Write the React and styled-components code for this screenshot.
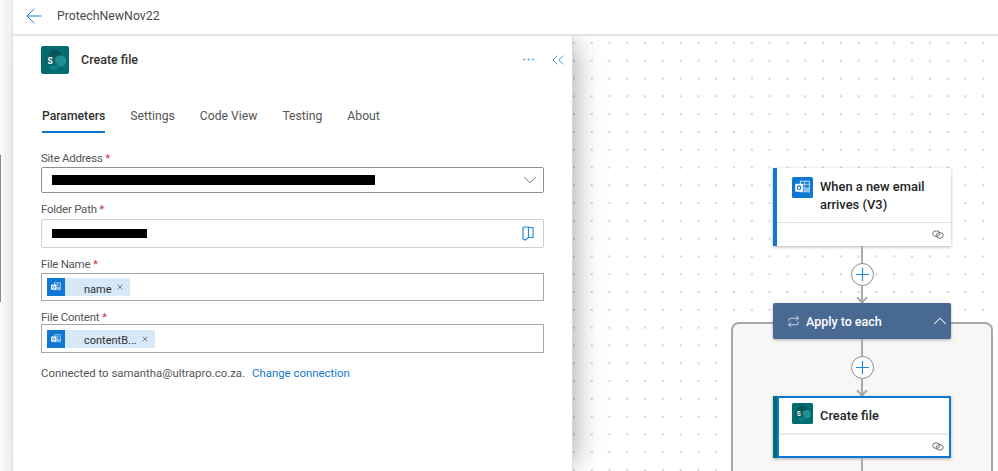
import React from 'react';
import styled, { createGlobalStyle } from 'styled-components';
import { ArrowLeft, ChevronDown, ChevronUp, ChevronsLeft, Ellipsis, Plus, Repeat, X } from 'lucide-react';

const Global = createGlobalStyle`
    html, body {
        margin: 0;
        padding: 0;
        background: #fff;
    }
    body {
        font-family: Roboto, "Open Sans", "Liberation Sans", sans-serif;
        color: #323130;
    }
`;

const SharePointIcon = ({ size }) => (
    <IconSvg width={size} height={size} viewBox="0 0 28 28">
        <rect width="28" height="28" rx="2" fill="#036c70" />
        <circle cx="14" cy="10.5" r="6.8" fill="#0a5357" />
        <circle cx="19.5" cy="15" r="5.8" fill="#1f8f92" />
        <circle cx="13" cy="20" r="4.6" fill="#0c7f83" />
        <rect x="4" y="9.5" width="10" height="10" rx="1" fill="#0a5f63" />
        <text x="9" y="17.5" fontSize="8.5" fontWeight="700" fill="#fff" textAnchor="middle">S</text>
    </IconSvg>
);

const OutlookIcon = ({ size }) => (
    <IconSvg width={size} height={size} viewBox="0 0 20 20">
        <rect width="20" height="20" rx="1.5" fill="#0f78d4" />
        <rect x="8" y="4" width="8.5" height="10" fill="none" stroke="#b9d8f3" strokeWidth="1" />
        <path d="M8 7h8.5M8 10.5h8.5M12 4v10" stroke="#b9d8f3" strokeWidth="0.8" />
        <path d="M9 11l7.5 4v-5z" fill="#8cc0ec" />
        <rect x="3" y="6.5" width="7.5" height="7.5" rx="1" fill="#fff" />
        <circle cx="6.7" cy="10.2" r="1.7" fill="none" stroke="#0f78d4" strokeWidth="1.1" />
    </IconSvg>
);

const LinkIcon = () => (
    <svg width="12" height="9" viewBox="0 0 12 9" fill="none" stroke="#707070" strokeWidth="1">
        <ellipse cx="4.2" cy="3.6" rx="3.5" ry="2.8" />
        <ellipse cx="7.8" cy="5.4" rx="3.5" ry="2.8" />
    </svg>
);

const FolderIcon = () => (
    <svg width="12" height="15" viewBox="0 0 12 15" fill="none" stroke="#2b88d8" strokeWidth="1.2">
        <path d="M1 1h5.5v10.5H11V1.5H6.5M1 1v12l2 1 3.5-2.5" />
    </svg>
);

const Field = ({ label, children }) => (
    <div>
        <FieldLabel>{label}<Star> *</Star></FieldLabel>
        {children}
    </div>
);

const Token = ({ text }) => (
    <TokenPill>
        <TokenIcon><OutlookIcon size={14} /></TokenIcon>
        <TokenText>{text}</TokenText>
        <X size={8} strokeWidth={2} color="#444" />
    </TokenPill>
);

const Connector = () => (
    <Wire $height={57}>
        <PlusButton><Plus size={21} strokeWidth={1.3} color="#1f8ae6" /></PlusButton>
        <ArrowHead />
    </Wire>
);

const tabs = ['Parameters', 'Settings', 'Code View', 'Testing', 'About'];

export default function App() {
    return (
        <Page>
            <Global />
            <LeftRail><RailLine /></LeftRail>
            <Main>
                <TopBar>
                    <ArrowLeft size={24} strokeWidth={1} color="#1a86e8" />
                    <FlowName>ProtechNewNov22</FlowName>
                </TopBar>
                <Body>
                    <Panel>
                        <PanelHeader>
                            <SharePointIcon size={28} />
                            <PanelTitle>Create file</PanelTitle>
                            <Ellipsis size={15} strokeWidth={1.4} color="#4a9be0" />
                            <ChevronsLeft size={20} strokeWidth={1.2} color="#4a9be0" />
                        </PanelHeader>
                        <Tabs>
                            {tabs.map((tab, i) => <Tab key={tab} $active={i === 0}>{tab}</Tab>)}
                        </Tabs>
                        <Form>
                            <Field label="Site Address">
                                <Select>
                                    <Redacted $width={323} $height={10} />
                                    <ChevronDown size={22} strokeWidth={0.9} color="#555" />
                                </Select>
                            </Field>
                            <Field label="Folder Path">
                                <PathInput>
                                    <Redacted $width={95} $height={9} />
                                    <FolderIcon />
                                </PathInput>
                            </Field>
                            <Field label="File Name">
                                <TokenInput $top={1} $height={28}><Token text="name" /></TokenInput>
                            </Field>
                            <Field label="File Content">
                                <TokenInput $top={-1} $height={29}><Token text="contentB..." /></TokenInput>
                            </Field>
                        </Form>
                        <Connection>
                            Connected to samantha@ultrapro.co.za.
                            <ChangeLink>Change connection</ChangeLink>
                        </Connection>
                    </Panel>
                    <Canvas>
                        <Flow>
                            <Card $accent="#0f78d4">
                                <CardHead>
                                    <OutlookIcon size={21} />
                                    <CardTitle $drop={1}>When a new email arrives (V3)</CardTitle>
                                </CardHead>
                                <CardFoot><LinkIcon /></CardFoot>
                            </Card>
                            <Connector />
                            <LoopArea>
                                <LoopBox />
                                <LoopHeader>
                                    <Repeat size={13} strokeWidth={1.3} color="#fff" />
                                    <LoopTitle>Apply to each</LoopTitle>
                                    <ChevronUp size={22} strokeWidth={1.1} color="#fff" />
                                </LoopHeader>
                                <Connector />
                                <Card $accent="#036c70" $selected>
                                    <CardHead $short>
                                        <SharePointIcon size={21} />
                                        <CardTitle $drop={4}>Create file</CardTitle>
                                    </CardHead>
                                    <CardFoot><LinkIcon /></CardFoot>
                                </Card>
                                <Wire $height={14} />
                            </LoopArea>
                        </Flow>
                    </Canvas>
                </Body>
            </Main>
        </Page>
    );
}

const IconSvg = styled.svg`
    flex: none;
`;
const Page = styled.div`
    display: flex;
    width: 998px;
    height: 471px;
    overflow: hidden;
`;
const LeftRail = styled.div`
    width: 13px;
    flex: none;
    background: linear-gradient(to right, #fafafa 0 4px, #f3f3f3 4px 11px, #e8e8e8 11px);
    padding-top: 155px;
    box-sizing: border-box;
`;
const RailLine = styled.div`
    width: 1px;
    height: 147px;
    background: #8a8a8a;
`;
const Main = styled.div`
    flex: 1;
    display: flex;
    flex-direction: column;
    min-width: 0;
`;
const TopBar = styled.div`
    height: 36px;
    box-sizing: border-box;
    display: flex;
    align-items: center;
    gap: 11px;
    padding: 0 0 2px 9px;
    background: #fff;
    border-bottom: 2px solid #e4e4e4;
    position: relative;
    z-index: 3;
`;
const FlowName = styled.div`
    font-size: 12.3px;
    color: #4a4a4a;
`;
const Body = styled.div`
    flex: 1;
    display: flex;
    min-height: 0;
`;
const Panel = styled.div`
    width: 560px;
    flex: none;
    box-sizing: border-box;
    background: #fff;
    padding: 9px 28px 0 28px;
    box-shadow: 10px 0 26px -8px rgba(0, 0, 0, 0.35);
    border-right: 1px solid #d8d8d8;
    position: relative;
    z-index: 2;
`;
const PanelHeader = styled.div`
    display: flex;
    align-items: center;
    gap: 12px;
    height: 29px;
    margin-right: -24px;
`;
const PanelTitle = styled.div`
    flex: 1;
    font-size: 12.5px;
    font-weight: 500;
    color: #323130;
`;
const Tabs = styled.div`
    display: flex;
    gap: 25px;
    margin-top: 34px;
    padding-left: 1px;
`;
const Tab = styled.div`
    font-size: 12.2px;
    line-height: 17px;
    padding-bottom: 6px;
    color: ${p => (p.$active ? '#323130' : '#555')};
    font-weight: ${p => (p.$active ? 500 : 400)};
    border-bottom: 2px solid ${p => (p.$active ? '#0f78d4' : 'transparent')};
`;
const Form = styled.div`
    margin-top: 17px;
    display: flex;
    flex-direction: column;
    gap: 8px;
`;
const FieldLabel = styled.div`
    font-size: 11.5px;
    line-height: 16px;
    letter-spacing: -0.25px;
    color: #555;
`;
const Star = styled.span`
    color: #c4314b;
`;
const Select = styled.div`
    height: 26px;
    margin-top: 1px;
    box-sizing: border-box;
    display: flex;
    align-items: center;
    justify-content: space-between;
    padding: 0 2px 0 10px;
    border: 1px solid #8f8f8f;
    border-radius: 2px;
`;
const PathInput = styled(Select)`
    height: 29px;
    margin-top: 2px;
    border-color: #cfcfcf;
    padding-right: 9px;
`;
const Redacted = styled.div`
    width: ${p => p.$width}px;
    height: ${p => p.$height}px;
    background: #000;
`;
const TokenInput = styled.div`
    height: ${p => p.$height}px;
    margin-top: ${p => p.$top}px;
    box-sizing: border-box;
    display: flex;
    align-items: center;
    padding-left: 5px;
    border: 1px solid #a6a6a6;
`;
const TokenPill = styled.div`
    display: flex;
    align-items: center;
    height: 18px;
    background: #d7e8f7;
    padding-right: 6px;
`;
const TokenIcon = styled.div`
    width: 18px;
    height: 18px;
    background: #0f78d4;
    display: flex;
    align-items: center;
    justify-content: center;
`;
const TokenText = styled.span`
    font-size: 11px;
    color: #323130;
    margin: 4px 4px 0 19px;
`;
const Connection = styled.div`
    margin-top: 12px;
    font-size: 11.4px;
    line-height: 16px;
    color: #555;
`;
const ChangeLink = styled.span`
    color: #0f78d4;
    margin-left: 7px;
`;
const Canvas = styled.div`
    flex: 1;
    min-width: 0;
    overflow: hidden;
    background-color: #fff;
    background-image: radial-gradient(circle, #d2d2d2 0.7px, transparent 1.1px);
    background-size: 17.8px 17.8px;
    background-position: -8px -2px;
`;
const Flow = styled.div`
    width: 178px;
    margin: 132px 0 0 200px;
    display: flex;
    flex-direction: column;
    align-items: stretch;
`;
const Card = styled.div`
    position: relative;
    background: #fff;
    box-sizing: border-box;
    border-left: 4px solid ${p => p.$accent};
    box-shadow: ${p => (p.$selected ? 'inset 0 0 0 2px #0f78d4, ' : '')}0 1px 3px rgba(0, 0, 0, 0.3);
`;
const CardHead = styled.div`
    display: flex;
    align-items: flex-start;
    gap: 7px;
    height: ${p => (p.$short ? '21px' : 'auto')};
    padding: ${p => (p.$short ? '7px 8px 9px 13px' : '9px 8px 9px 15px')};
    border-bottom: ${p => (p.$short ? '2px solid #ececec' : '1px solid #e4e4e4')};
    margin: ${p => (p.$short ? '0 2px' : '0')};
`;
const CardTitle = styled.div`
    font-size: 12.9px;
    line-height: 17.5px;
    font-weight: 500;
    color: #242424;
    margin-top: ${p => p.$drop}px;
`;
const CardFoot = styled.div`
    height: 23px;
    display: flex;
    align-items: center;
    justify-content: flex-end;
    padding-right: 7px;
`;
const Wire = styled.div`
    align-self: center;
    position: relative;
    width: 2px;
    height: ${p => p.$height}px;
    background: #aaa;
    display: flex;
    align-items: center;
    justify-content: center;
`;
const PlusButton = styled.div`
    flex: none;
    width: 21px;
    height: 21px;
    border-radius: 50%;
    border: 1px solid #8a8a8a;
    background: #fff;
    display: flex;
    align-items: center;
    justify-content: center;
`;
const ArrowHead = styled.div`
    position: absolute;
    bottom: 1px;
    left: -3px;
    width: 8px;
    height: 8px;
    box-sizing: border-box;
    border-right: 2px solid #aaa;
    border-bottom: 2px solid #aaa;
    transform: rotate(45deg);
`;
const LoopArea = styled.div`
    position: relative;
    display: flex;
    flex-direction: column;
`;
const LoopBox = styled.div`
    position: absolute;
    top: 19px;
    left: -42px;
    width: 262px;
    height: 300px;
    box-sizing: border-box;
    background: #f8f7f6;
    border: 2px solid #a8a8a8;
    border-radius: 8px;
`;
const LoopHeader = styled.div`
    position: relative;
    height: 36px;
    display: flex;
    align-items: center;
    padding: 0 0 0 14px;
    background: #486991;
    border-radius: 2px;
    box-shadow: 0 1px 3px rgba(0, 0, 0, 0.3);
`;
const LoopTitle = styled.div`
    flex: 1;
    margin-left: 6px;
    font-size: 12.5px;
    font-weight: 500;
    color: #fff;
`;
